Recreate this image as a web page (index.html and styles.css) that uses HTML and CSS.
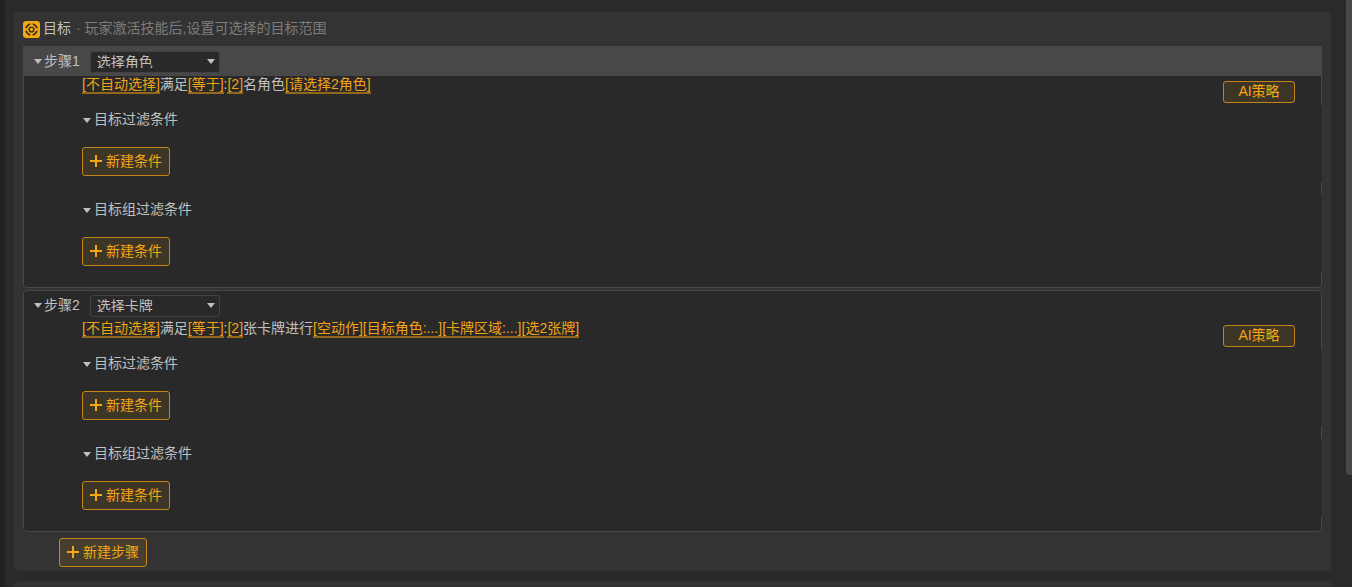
FILE: index.html
```html
<!DOCTYPE html>
<html lang="zh-CN">
<head>
  <meta charset="UTF-8" />
  <meta name="viewport" content="width=device-width, initial-scale=1" />
  <title>目标</title>
  <link rel="stylesheet" href="styles.css">
</head>
<body>
  <main class="page">
    <section class="panel">
      <header class="panel-header">
        <svg class="panel-icon" viewBox="0 0 17 17" aria-hidden="true">
          <rect width="17" height="17" rx="3" fill="#f5a614" />
          <circle cx="8.5" cy="8.5" r="5.6" fill="none" stroke="#3a3020" stroke-width="1.7" />
          <path d="M8.5 1.5v4M8.5 11.5v4M1.5 8.5h4M11.5 8.5h4" stroke="#f5a614" stroke-width="2.4" />
          <circle cx="8.5" cy="8.5" r="2.4" fill="none" stroke="#3a3020" stroke-width="1.4" />
        </svg>
        <h2 class="panel-title">目标</h2>
        <span class="panel-hint">· 玩家激活技能后,设置可选择的目标范围</span>
      </header>

      <div class="steps">
        <article class="step">
          <header class="step-header active">
            <div class="step-name">
              <button class="fold" type="button" aria-label="折叠"><span class="arrow"></span></button>
              <label for="step1">步骤1</label>
            </div>
            <select class="step-type" id="step1">
              <option>选择角色</option>
              <option>选择卡牌</option>
            </select>
          </header>
          <div class="step-body">
            <div class="rule">
              <p class="rule-text"><a href="#">[不自动选择]</a>满足<a href="#">[等于]</a>:<a href="#">[2]</a>名角色<a href="#">[请选择2角色]</a></p>
              <button class="btn ai-btn" type="button">AI策略</button>
            </div>
            <div class="filter">
              <button class="fold" type="button"><span class="arrow"></span>目标过滤条件</button>
              <button class="btn add-btn" type="button"><svg class="plus" viewBox="0 0 12 12" aria-hidden="true"><path d="M6 0v12M0 6h12" /></svg>新建条件</button>
            </div>
            <div class="filter">
              <button class="fold" type="button"><span class="arrow"></span>目标组过滤条件</button>
              <button class="btn add-btn" type="button"><svg class="plus" viewBox="0 0 12 12" aria-hidden="true"><path d="M6 0v12M0 6h12" /></svg>新建条件</button>
            </div>
          </div>
        </article>

        <article class="step">
          <header class="step-header">
            <div class="step-name">
              <button class="fold" type="button" aria-label="折叠"><span class="arrow"></span></button>
              <label for="step2">步骤2</label>
            </div>
            <select class="step-type" id="step2">
              <option>选择卡牌</option>
              <option>选择角色</option>
            </select>
          </header>
          <div class="step-body">
            <div class="rule">
              <p class="rule-text"><a href="#">[不自动选择]</a>满足<a href="#">[等于]</a>:<a href="#">[2]</a>张卡牌进行<a href="#">[空动作]</a><a href="#">[目标角色:...]</a><a href="#">[卡牌区域:...]</a><a href="#">[选2张牌]</a></p>
              <button class="btn ai-btn" type="button">AI策略</button>
            </div>
            <div class="filter">
              <button class="fold" type="button"><span class="arrow"></span>目标过滤条件</button>
              <button class="btn add-btn" type="button"><svg class="plus" viewBox="0 0 12 12" aria-hidden="true"><path d="M6 0v12M0 6h12" /></svg>新建条件</button>
            </div>
            <div class="filter">
              <button class="fold" type="button"><span class="arrow"></span>目标组过滤条件</button>
              <button class="btn add-btn" type="button"><svg class="plus" viewBox="0 0 12 12" aria-hidden="true"><path d="M6 0v12M0 6h12" /></svg>新建条件</button>
            </div>
          </div>
        </article>
      </div>

      <footer class="panel-footer">
        <button class="btn add-btn" type="button"><svg class="plus" viewBox="0 0 12 12" aria-hidden="true"><path d="M6 0v12M0 6h12" /></svg>新建步骤</button>
      </footer>
    </section>
    <section class="panel next-panel"></section>
  </main>
  <div class="scroll-thumb"></div>
</body>
</html>
```
FILE: styles.css
```css
* {
  box-sizing: border-box;
}
body {
  margin: 0;
  min-height: 100vh;
  display: flex;
  align-items: flex-start;
  background: #2a2a2a;
  border-left: 5px solid #202020;
  color: #c0c0c0;
  font-family: "Liberation Sans", "Noto Sans CJK SC", sans-serif;
  font-size: 14px;
  line-height: 20px;
}
button,
select {
  font: inherit;
  color: inherit;
}
button {
  padding: 0;
  border: none;
  background: none;
  cursor: pointer;
}
.page {
  flex: 1;
  display: flex;
  flex-direction: column;
  gap: 10px;
  min-height: 100vh;
  padding: 12px 15px 0 9px;
}
.panel {
  background: #333;
  border-radius: 4px;
  padding: 0 9px;
}
.next-panel {
  flex: 1;
  border-bottom-left-radius: 0;
  border-bottom-right-radius: 0;
}

/* panel header */
.panel-header {
  display: flex;
  align-items: center;
  height: 34px;
  padding-bottom: 2px;
}
.panel-icon {
  width: 17px;
  height: 17px;
  margin: 2px 3px 0 0;
}
.panel-title {
  margin: 0 5px 0 0;
  font-size: 14px;
  font-weight: normal;
}
.panel-hint {
  color: #7d7d7d;
}

/* steps */
.steps {
  display: flex;
  flex-direction: column;
  gap: 2px;
}
.step {
  background: #292929;
  border: 1px solid #484848;
  border-radius: 4px;
}
.step:first-child {
  border-top-left-radius: 0;
  border-top-right-radius: 0;
}
.step-header {
  display: flex;
  align-items: center;
  gap: 10px;
  height: 29px;
  padding-left: 10px;
}
.step-header.active {
  background: #484848;
}
.step-name {
  display: flex;
  align-items: center;
  gap: 2px;
  padding-bottom: 2px;
}
.fold {
  display: flex;
  align-items: center;
  gap: 3px;
  height: 28px;
}
.arrow {
  border: 4px solid transparent;
  border-top: 5px solid #c0c0c0;
  border-bottom: none;
  margin-top: 2px;
}
.step-type {
  appearance: none;
  width: 130px;
  height: 22px;
  padding: 0 20px 4px 6px;
  border: 1px solid #424242;
  border-radius: 3px;
  background: #292929 url("data:image/svg+xml,%3Csvg xmlns='http://www.w3.org/2000/svg' width='8' height='5'%3E%3Cpath d='M0 0h8L4 5z' fill='%23c0c0c0'/%3E%3C/svg%3E") no-repeat right 4px center;
}
.step-body {
  padding: 0 0 15px 58px;
}
.rule {
  display: flex;
  align-items: flex-start;
  justify-content: space-between;
  height: 29px;
  padding-right: 26px;
}
.rule-text {
  margin: 0;
  line-height: 16px;
}
.rule-text a {
  color: #f0a314;
  text-decoration: none;
  border-bottom: 2px solid #94681a;
}
.filter {
  display: flex;
  flex-direction: column;
  align-items: flex-start;
  gap: 14px;
  margin-right: -1px;
  padding-bottom: 6px;
  background: #292929;
}
.filter + .filter {
  margin-top: 13px;
}
.filter .fold {
  padding-left: 1px;
}

/* buttons */
.btn {
  display: flex;
  align-items: center;
  justify-content: center;
  border: 1px solid #c58516;
  border-radius: 3px;
  background: rgba(245, 166, 20, 0.1);
  color: #f5a614;
}
.ai-btn {
  width: 72px;
  height: 22px;
  margin-top: 5px;
  padding-bottom: 2px;
}
.add-btn {
  gap: 4px;
  width: 88px;
  height: 29px;
  padding-bottom: 1px;
}
.plus {
  width: 12px;
  height: 12px;
  fill: none;
  stroke: #f5a614;
  stroke-width: 2;
}
.panel-footer {
  padding: 6px 0 4px 36px;
}

/* scrollbar */
.scroll-thumb {
  width: 6px;
  height: 81vh;
  background: #484848;
  border-bottom-left-radius: 4px;
}
```
